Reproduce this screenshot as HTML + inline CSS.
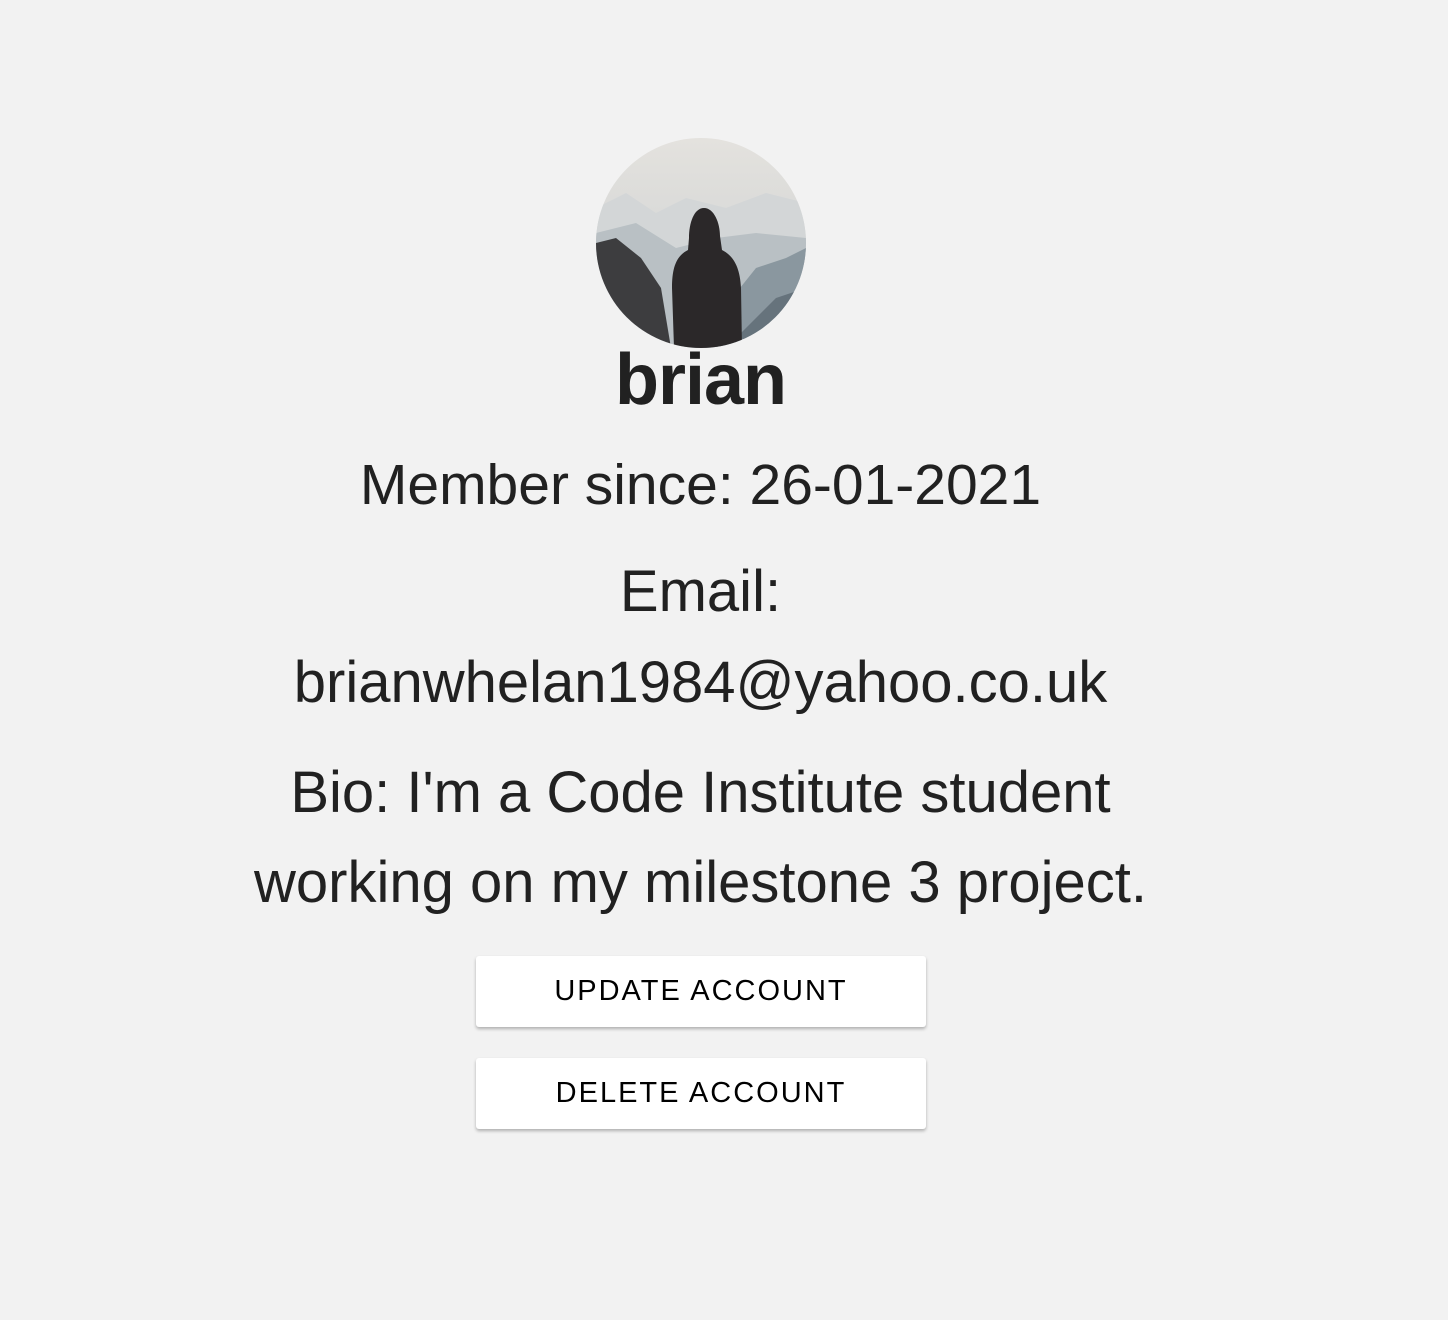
<!DOCTYPE html>
<html><head><meta charset="utf-8"><style>
html,body{margin:0;padding:0;background:#f2f2f2;width:1448px;height:1320px;overflow:hidden}
body{font-family:"Liberation Sans",sans-serif;color:#212121;position:relative}
.l{position:absolute;left:0;width:1401px;text-align:center;white-space:nowrap;line-height:1}
.l span{display:inline-block}
.av{position:absolute;left:596px;top:138px;width:210px;height:210px;border-radius:50%;overflow:hidden}
.btn{position:absolute;left:476px;width:450px;height:71px;background:#fff;border-radius:3px;box-shadow:0 2px 3px rgba(0,0,0,.28);text-align:center;line-height:71px;font-size:29px;letter-spacing:2px;color:#000}
</style></head><body>
<div class="av"><svg width="210" height="210" viewBox="0 0 210 210">
<defs><linearGradient id="sky" x1="0" y1="0" x2="0" y2="1"><stop offset="0" stop-color="#e4e2de"/><stop offset="1" stop-color="#c9ced0"/></linearGradient></defs>
<rect width="210" height="210" fill="url(#sky)"/>
<path d="M0 70 L30 55 L60 75 L90 60 L130 70 L170 55 L210 65 L210 210 L0 210Z" fill="#d3d6d7"/>
<path d="M0 95 L40 85 L80 110 L120 100 L160 95 L210 100 L210 210 L0 210Z" fill="#b9c0c4"/>
<path d="M120 180 L160 130 L190 120 L210 110 L210 210 L120 210Z" fill="#8a979f"/>
<path d="M140 200 L180 160 L210 150 L210 210Z" fill="#66737c"/>
<path d="M0 105 L20 100 L45 120 L65 150 L75 210 L0 210Z" fill="#3d3d3f"/>
<path d="M108 70 C98 70 93 85 93 100 L92 112 C80 118 76 130 76 150 L78 210 L146 210 L145 150 C144 130 138 118 126 112 L124 98 C124 85 118 70 108 70Z" fill="#2b2829"/>
</svg></div>
<div class="l" style="top:344px;font-size:72px;font-weight:bold;letter-spacing:-1px"><span>brian</span></div>
<div class="l" style="top:457px;font-size:57px"><span>Member since: 26-01-2021</span></div>
<div class="l" style="top:563px;font-size:58px"><span>Email:</span></div>
<div class="l" style="top:654px;font-size:58px"><span>brianwhelan1984@yahoo.co.uk</span></div>
<div class="l" style="top:764px;font-size:58px"><span>Bio: I'm a Code Institute student</span></div>
<div class="l" style="top:854px;font-size:58px"><span>working on my milestone 3 project.</span></div>
<div class="btn" style="top:956px">UPDATE ACCOUNT</div>
<div class="btn" style="top:1058px">DELETE ACCOUNT</div>
</body></html>
